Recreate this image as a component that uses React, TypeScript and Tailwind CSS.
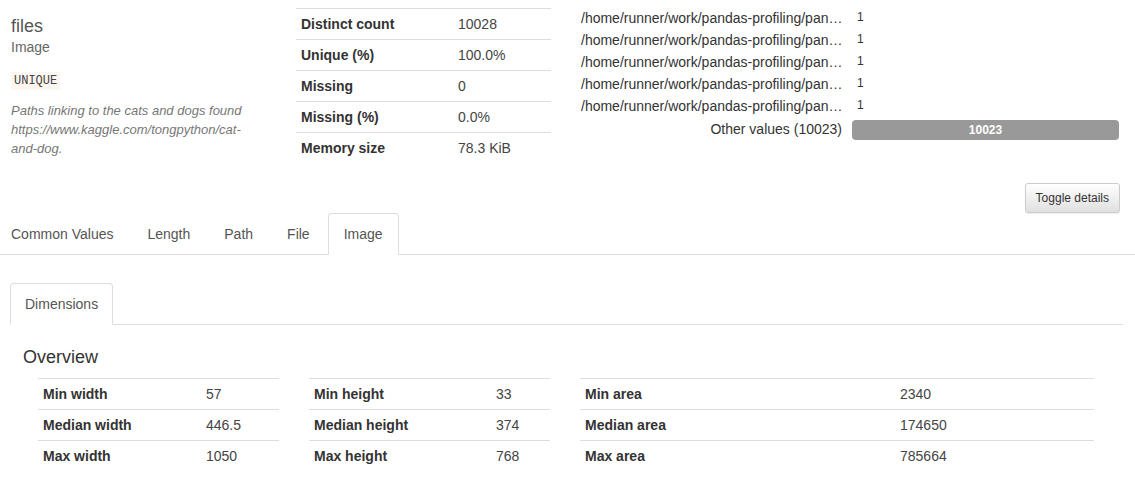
import React from 'react';

const font = { fontFamily: '"Liberation Sans", Arial, sans-serif' };

const stats = [
  ['Distinct count', '10028'],
  ['Unique (%)', '100.0%'],
  ['Missing', '0'],
  ['Missing (%)', '0.0%'],
  ['Memory size', '78.3 KiB'],
];

const freq = Array.from({ length: 5 }, () => '/home/runner/work/pandas-profiling/pan…');

const tabs = ['Common Values', 'Length', 'Path', 'File', 'Image'];

const overview = [
  {
    width: 'w-[241px]',
    labelWidth: 'w-[163px]',
    rows: [
      ['Min width', '57'],
      ['Median width', '446.5'],
      ['Max width', '1050'],
    ],
  },
  {
    width: 'w-[241px]',
    labelWidth: 'w-[182px]',
    rows: [
      ['Min height', '33'],
      ['Median height', '374'],
      ['Max height', '768'],
    ],
  },
  {
    width: 'w-[514px]',
    labelWidth: 'w-[315px]',
    rows: [
      ['Min area', '2340'],
      ['Median area', '174650'],
      ['Max area', '785664'],
    ],
  },
];

function StatTable({
  rows,
  width,
  labelWidth,
}: {
  rows: string[][];
  width: string;
  labelWidth: string;
}) {
  return (
    <div className={`${width} shrink-0`}>
      {rows.map(([label, value]) => (
        <div key={label} className="flex border-t border-[#ddd] h-[31px] items-center text-[14px] leading-5">
          <div className={`${labelWidth} shrink-0 pl-[5px] font-bold text-[#333]`}>{label}</div>
          <div className="pl-[5px] text-[#444]">{value}</div>
        </div>
      ))}
    </div>
  );
}

export default function App() {
  return (
    <div className="w-[1135px] h-[486px] bg-white overflow-hidden text-[#333]" style={font}>
      {/* top summary row */}
      <div className="flex pt-[7px] h-[189px]">
        <div className="w-[266px] shrink-0 pl-[11px] pt-[9px]">
          <div className="text-[18px] leading-5 text-[#555]">files</div>
          <div className="text-[14px] leading-5 text-[#666] mt-[1px]">Image</div>
          <div className="mt-[15px] inline-block bg-[#fbf6ef] px-[3px] h-[18px] leading-[18px] text-[12px] text-[#444]" style={{ fontFamily: '"Liberation Mono", monospace' }}>
            UNIQUE
          </div>
          <p className="mt-[10px] text-[13px] leading-[19px] italic text-[#777] pr-[8px]">
            Paths linking to the cats and dogs found https://www.kaggle.com/tongpython/cat-and-dog.
          </p>
        </div>

        <div className="ml-[30px] mt-[1px]">
          <StatTable rows={stats} width="w-[255px]" labelWidth="w-[157px]" />
        </div>

        <div className="ml-[30px] w-[539px] shrink-0">
          {freq.map((label, i) => (
            <div key={i} className="flex h-[22px] items-center">
              <div className="w-[266px] shrink-0 text-right pr-[5px] text-[14px] leading-5 text-[#333] whitespace-nowrap">
                {label}
              </div>
              <div className="pl-[5px] flex items-center">
                <div className="w-[1px] h-[18px]" />
                <span className="ml-[4px] text-[12px] leading-4 -mt-[3px] text-[#333]">1</span>
              </div>
            </div>
          ))}
          <div className="flex h-[23px] items-center">
            <div className="w-[266px] shrink-0 text-right pr-[5px] text-[14px] leading-5 text-[#333]">
              Other values (10023)
            </div>
            <div className="pl-[5px] flex-1 pr-[1px]">
              <div className="h-[20px] bg-[#999] rounded-[4px] flex items-center justify-center text-white font-bold text-[12px] mt-[2px]">
                10023
              </div>
            </div>
          </div>
        </div>
      </div>

      {/* toggle button */}
      <div className="flex justify-end pr-[15px] -mt-[6px]">
        <button className="h-[30px] px-[10px] text-[12px] text-[#333] border border-[#ccc] rounded-[3px] bg-gradient-to-b from-white to-[#e0e0e0] shadow-[inset_0_1px_0_rgba(255,255,255,0.15),0_1px_1px_rgba(0,0,0,0.075)]">
          Toggle details
        </button>
      </div>

      {/* outer tabs */}
      <div className="flex border-b border-[#ddd] -ml-[5px] w-[1145px]">
        {tabs.map((t) => {
          const active = t === 'Image';
          return (
            <div
              key={t}
              className={`-mb-px mr-[2px] px-[15px] py-[10px] leading-5 text-[14px] rounded-t-[4px] border ${
                active ? 'border-[#ddd] border-b-white bg-white text-[#555]' : 'border-transparent text-[#555]'
              }`}
            >
              {t}
            </div>
          );
        })}
      </div>

      {/* inner tabs */}
      <div className="ml-[10px] w-[1113px] mt-[28px]">
        <div className="flex border-b border-[#ddd]">
          <div className="-mb-px px-[14px] py-[10px] leading-5 text-[14px] rounded-t-[4px] border border-[#ddd] border-b-white bg-white text-[#555]">
            Dimensions
          </div>
        </div>

        <div className="pl-[13px]">
          <h4 className="mt-[22px] text-[18px] leading-5 text-[#333]">Overview</h4>
          <div className="flex gap-[30px] pl-[15px] mt-[11px]">
            {overview.map((t, i) => (
              <StatTable key={i} rows={t.rows} width={t.width} labelWidth={t.labelWidth} />
            ))}
          </div>
        </div>
      </div>
    </div>
  );
}
